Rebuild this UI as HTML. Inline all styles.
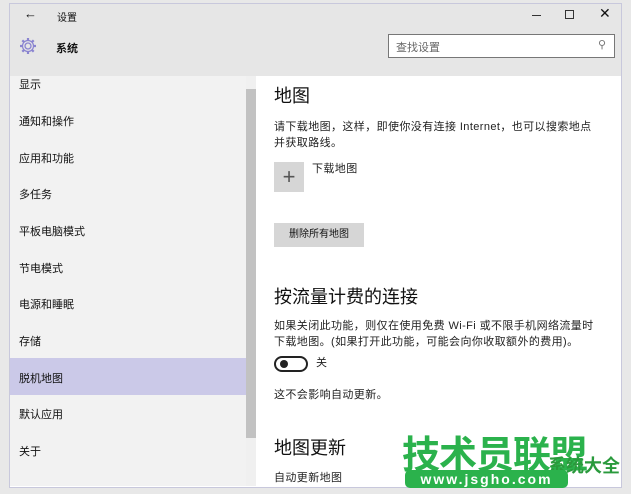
<!DOCTYPE html><html><head><meta charset="utf-8"><style>
body{margin:0;width:631px;height:494px;background:#e8e8e8;position:relative;overflow:hidden;font-family:"Liberation Sans","Noto Sans CJK SC",sans-serif;color:#111}
.a{position:absolute}
.win{left:9px;top:3px;width:611px;height:483px;background:#fff;border:1px solid #c8c8dc}
.ti{font-size:11px}
.nav{font-size:11px;left:19px}
.c{font-size:11px;left:274px;color:#222;line-height:16px;letter-spacing:0.4px;white-space:nowrap}
</style></head><body>
<div class="a win"></div>
<div class="a" style="left:10px;top:4px;width:611px;height:72px;background:#e6e6e6"></div>
<div class="a ti" style="left:24px;top:6px;font-size:13px">←</div>
<div class="a ti" style="left:57px;top:9px;font-size:10px">设置</div>
<div class="a" style="left:532px;top:15px;width:9px;height:1px;background:#333"></div>
<div class="a" style="left:565px;top:10px;width:7px;height:7px;border:1px solid #333"></div>
<div class="a" style="left:599px;top:5px;font-size:14px">✕</div>
<svg class="a" style="left:18px;top:36px" width="20" height="20" viewBox="0 0 20 20"><circle cx="10" cy="10" r="3" fill="none" stroke="#8a84d0" stroke-width="1.3"/><path d="M10 2v3M10 15v3M2 10h3M15 10h3M4.3 4.3l2.1 2.1M13.6 13.6l2.1 2.1M4.3 15.7l2.1-2.1M13.6 6.4l2.1-2.1" stroke="#8a84d0" stroke-width="2.2"/><circle cx="10" cy="10" r="5.5" fill="none" stroke="#8a84d0" stroke-width="1.2"/></svg>
<div class="a" style="left:56px;top:40px;font-size:11px;font-weight:bold">系统</div>
<div class="a" style="left:388px;top:34px;width:225px;height:22px;background:#fff;border:1px solid #777"></div>
<div class="a" style="left:396px;top:39px;font-size:11px;color:#666">查找设置</div>
<div class="a" style="left:598px;top:38px;font-size:11px;color:#777">⚲</div>
<div class="a" style="left:10px;top:76px;width:236px;height:410px;background:#f2f2f2"></div>
<div class="a" style="left:246px;top:76px;width:10px;height:410px;background:#f0f0f0"></div>
<div class="a" style="left:246px;top:89px;width:10px;height:349px;background:#c2c2c2"></div>
<div class="a" style="left:10px;top:358px;width:236px;height:37px;background:#cbc9e8"></div>
<div class="a nav" style="top:76px">显示</div>
<div class="a nav" style="top:113px">通知和操作</div>
<div class="a nav" style="top:150px">应用和功能</div>
<div class="a nav" style="top:186px">多任务</div>
<div class="a nav" style="top:223px">平板电脑模式</div>
<div class="a nav" style="top:260px">节电模式</div>
<div class="a nav" style="top:296px">电源和睡眠</div>
<div class="a nav" style="top:333px">存储</div>
<div class="a nav" style="top:370px">脱机地图</div>
<div class="a nav" style="top:406px">默认应用</div>
<div class="a nav" style="top:443px">关于</div>
<div class="a" style="left:274px;top:82px;font-size:18px">地图</div>
<div class="a c" style="top:119px">请下载地图，这样，即使你没有连接 Internet，也可以搜索地点<br>并获取路线。</div>
<div class="a" style="left:274px;top:162px;width:30px;height:30px;background:#d6d6d6;font-size:22px;color:#555;text-align:center;line-height:30px">+</div>
<div class="a c" style="left:312px;top:161px">下载地图</div>
<div class="a" style="left:274px;top:223px;width:90px;height:24px;background:#d6d6d6;font-size:10px;text-align:center;line-height:24px">删除所有地图</div>
<div class="a" style="left:274px;top:283px;font-size:18px">按流量计费的连接</div>
<div class="a c" style="top:318px">如果关闭此功能，则仅在使用免费 Wi-Fi 或不限手机网络流量时<br>下载地图。(如果打开此功能，可能会向你收取额外的费用)。</div>
<div class="a" style="left:274px;top:356px;width:30px;height:12px;border:2px solid #222;border-radius:9px"></div>
<div class="a" style="left:280px;top:360px;width:8px;height:8px;border-radius:50%;background:#222"></div>
<div class="a c" style="left:316px;top:355px">关</div>
<div class="a c" style="top:387px">这不会影响自动更新。</div>
<div class="a" style="left:274px;top:434px;font-size:18px">地图更新</div>
<div class="a c" style="top:470px">自动更新地图</div>
<div class="a" style="left:402px;top:424px;font-size:38px;font-weight:bold;color:#2bb24c;letter-spacing:-1px">技术员联盟</div>
<div class="a" style="left:548px;top:452px;font-size:18px;font-weight:bold;color:#2a9a3c">系统大全</div>
<div class="a" style="left:405px;top:470px;width:163px;height:18px;background:#2bb24c;border-radius:5px;color:#fff;font-size:14px;font-weight:bold;text-align:center;line-height:18px;letter-spacing:2px">www.jsgho.com</div>
</body></html>
